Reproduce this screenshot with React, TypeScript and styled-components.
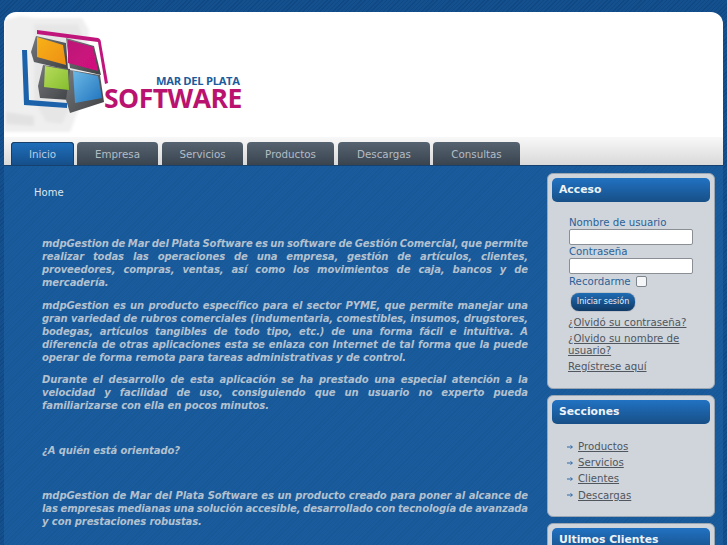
import React from "react";
import styled, { createGlobalStyle } from "styled-components";

const GlobalStyle = createGlobalStyle`
    html, body {
        margin: 0;
        padding: 0;
        height: 545px;
        overflow: hidden;
    }
    body {
        background-color: #124c88;
        background-image: repeating-linear-gradient(135deg, #104883 0 1px, #14508e 1px 3px);
        font-family: "DejaVu Sans", Verdana, sans-serif;
    }
`;

const Page = styled.div`
    margin: 12px 4px 0 4px;
    width: 719px;
`;

const Header = styled.header`
    background: #fff;
    border-radius: 12px 12px 0 0;
    height: 125px;
    overflow: hidden;
`;

const NavBar = styled.nav`
    display: flex;
    align-items: flex-end;
    height: 28px;
    padding-left: 7px;
    background: linear-gradient(#f8f8f8, #d9d9d9);
    border-bottom: 1px solid #16406e;
`;

const Tab = styled.a<{ $active?: boolean; $width: number; $gap: number }>`
    display: flex;
    align-items: center;
    justify-content: center;
    box-sizing: border-box;
    width: ${(p) => p.$width}px;
    margin-right: ${(p) => p.$gap}px;
    height: 23px;
    border-radius: 4px 4px 0 0;
    font-size: 10.3px;
    color: ${(p) => (p.$active ? "#b9cde2" : "#b4bcc4")};
    background: ${(p) => (p.$active ? "linear-gradient(#1f6fbb, #154f8b)" : "linear-gradient(#566370, #39444f)")};
    box-shadow: ${(p) => (p.$active ? "inset 0 1px 0 #173f68, inset 1px 0 0 #173f68, inset -1px 0 0 #173f68" : "none")};
`;

const Main = styled.div`
    display: flex;
    align-items: flex-start;
    background-color: #185a9b;
    background-image: repeating-linear-gradient(135deg, #175897 0 1px, #195b9c 1px 3px);
    height: 380px;
`;

const Content = styled.main`
    width: 494px;
    margin-left: 30px;
    padding-top: 20px;
`;

const Crumb = styled.div`
    font-size: 10px;
    color: #dce6f0;
    margin-bottom: 37px;
    line-height: 14px;
`;

const Article = styled.article`
    margin-left: 8px;
`;

const Para = styled.p<{ $gap?: number }>`
    margin: 0 0 ${(p) => p.$gap ?? 10}px 0;
    font-size: 10px;
    letter-spacing: -0.1px;
    word-spacing: -1.5px;
    line-height: 13px;
    font-weight: bold;
    font-style: italic;
    color: #b3c1cf;
`;

// the reference breaks its lines a little tighter than this font does, so they are set by hand
const Line = styled.span`
    display: block;
    text-align: justify;
    text-align-last: justify;

    &:last-child {
        text-align-last: left;
        word-spacing: 0;
    }
`;

const Sidebar = styled.aside`
    width: 168px;
    margin-left: 19px;
    padding-top: 7px;
    display: flex;
    flex-direction: column;
    gap: 6px;
`;

const Module = styled.section`
    box-sizing: border-box;
    background: #d0d5dc;
    border: 1px solid #9aa6b2;
    border-radius: 6px;
    padding: 4px;
`;

const ModuleTitle = styled.h3`
    margin: 0;
    height: 24px;
    line-height: 23px;
    padding-left: 7px;
    border-radius: 5px;
    font-size: 10.8px;
    font-weight: bold;
    color: #eef3f8;
    background: linear-gradient(#2172c2, #174f87);
`;

const LoginForm = styled.form`
    padding: 14px 0 6px 17px;
    font-size: 10.2px;
    color: #2a6298;
`;

const FieldLabel = styled.label`
    display: block;
    line-height: 13px;
`;

const TextField = styled.div`
    box-sizing: border-box;
    width: 124px;
    height: 16px;
    background: #fff;
    border: 1px solid #8a8f95;
    border-radius: 2px;
`;

const RememberRow = styled.div`
    display: flex;
    align-items: center;
    gap: 5px;
    height: 15px;
`;

const CheckBox = styled.span`
    box-sizing: border-box;
    width: 11px;
    height: 11px;
    background: #f4f6f8;
    border: 1px solid #7f858c;
    border-radius: 2px;
`;

const LoginButton = styled.div`
    width: 64px;
    height: 18px;
    margin: 4px 0 0 2px;
    border-radius: 8px;
    text-align: center;
    font-size: 8px;
    line-height: 17px;
    color: #e6eef6;
    background: linear-gradient(#1f6cb4, #103a66);
    box-shadow: 0 0 1px #223;
`;

const LinkList = styled.div`
    padding: 0 6px 7px 16px;
    font-size: 10.2px;
    line-height: 11.5px;
`;

const LinkItem = styled.a`
    display: block;
    margin-bottom: 4.5px;
    color: #4f565e;
    text-decoration: underline;
`;

const SectionList = styled.ul`
    list-style: none;
    margin: 0;
    padding: 15px 0 9px 15px;
`;

const SectionItem = styled.li`
    display: flex;
    align-items: center;
    gap: 5px;
    height: 16.2px;
    font-size: 10.2px;
    color: #4f565e;
    text-decoration: underline;
`;

const Arrow = () => (
    <svg width="6" height="6" viewBox="0 0 6 6" fill="none" stroke="#2a6bab" strokeWidth="1">
        <path d="M0 3h5M3.5 1.5 5.5 3 3.5 4.5" />
    </svg>
);

// viewBox starts at the header's corner, so the numbers below are page coordinates
const Logo = () => (
    <svg width="250" height="125" viewBox="4 12 250 125">
        <defs>
            <linearGradient id="orange" x1="0" y1="0" x2="1" y2="1"><stop offset="0" stopColor="#f7b21a" /><stop offset="1" stopColor="#ee8f10" /></linearGradient>
            <linearGradient id="magenta" x1="0" y1="0" x2="1" y2="1"><stop offset="0" stopColor="#bb1577" /><stop offset="1" stopColor="#d5107f" /></linearGradient>
            <linearGradient id="green" x1="0" y1="0" x2="1" y2="1"><stop offset="0" stopColor="#b7dc5b" /><stop offset="1" stopColor="#86bd2e" /></linearGradient>
            <linearGradient id="blue" x1="0" y1="0" x2="1" y2="1"><stop offset="0" stopColor="#6cb8e6" /><stop offset="1" stopColor="#1f73bd" /></linearGradient>
            <linearGradient id="body" x1="0" y1="0" x2="1" y2="1"><stop offset="0" stopColor="#77797c" /><stop offset="1" stopColor="#3e4144" /></linearGradient>
            <filter id="soft"><feGaussianBlur stdDeviation="0.5" /></filter>
            <filter id="softer"><feGaussianBlur stdDeviation="1.5" /></filter>
        </defs>
        <g filter="url(#softer)">
            <path d="M4 20 20 16 34 18 82 18 89 30 85 92 70 132 4 132Z" fill="#efefef" />
            <path d="M34 24 78 24 82 34 78 90 62 124 46 122 34 100Z" fill="#e6e6e6" />
            <path d="M6 112 34 116 34 126 6 124Z" fill="#e2e2e2" />
        </g>
        <g filter="url(#soft)">
            <path d="M27 50 22 50 24 105 67 108 67 103 29 100Z" fill="#1c62aa" />
            <path d="M37 34 37 30 98 38 Q101 39 101 43 L108 83 105 84 98 42 37 34Z" fill="#c0167c" />
            <path d="M36 36 66 43 68 70 34 62 31 52Z" fill="url(#body)" />
            <path d="M66 38 94 46 101 75 70 68Z" fill="url(#body)" />
            <path d="M43 65 70 69 72 92 70 100 40 98 38 86Z" fill="url(#body)" />
            <path d="M70 70 100 75 104 102 70 113 66 100Z" fill="url(#body)" />
            <path d="M37 37 63 45 66 65 37 57Z" fill="url(#orange)" />
            <path d="M68 40 93 47 98 71 68 63Z" fill="url(#magenta)" />
            <path d="M45 66 68 70 69 90 44 87Z" fill="url(#green)" />
            <path d="M73 71 98 76 102 98 75 103Z" fill="url(#blue)" />
        </g>
        <text x="156" y="85" fontFamily="Open Sans" fontWeight="700" fontSize="11.2" fill="#1c5c9c" letterSpacing="-0.3">MAR DEL PLATA</text>
        <text x="104" y="108" fontFamily="Open Sans" fontWeight="700" fontSize="26.5" fill="#b9126f" letterSpacing="-0.5">SOFTWARE</text>
    </svg>
);

const tabs = [
    { label: "Inicio", width: 63, gap: 3, active: true },
    { label: "Empresa", width: 81, gap: 4 },
    { label: "Servicios", width: 81, gap: 4 },
    { label: "Productos", width: 87, gap: 4 },
    { label: "Descargas", width: 92, gap: 3 },
    { label: "Consultas", width: 87, gap: 0 },
];

const sections = ["Productos", "Servicios", "Clientes", "Descargas"];

const paragraphs = [
    {
        gap: 10,
        lines: [
            "mdpGestion de Mar del Plata Software es un software de Gestión Comercial, que permite",
            "realizar todas las operaciones de una empresa, gestión de artículos, clientes,",
            "proveedores, compras, ventas, así como los movimientos de caja, bancos y de",
            "mercadería.",
        ],
    },
    {
        gap: 9,
        lines: [
            "mdpGestion es un producto específico para el sector PYME, que permite manejar una",
            "gran variedad de rubros comerciales (indumentaria, comestibles, insumos, drugstores,",
            "bodegas, artículos tangibles de todo tipo, etc.) de una forma fácil e intuitiva. A",
            "diferencia de otras aplicaciones esta se enlaza con Internet de tal forma que la puede",
            "operar de forma remota para tareas administrativas y de control.",
        ],
    },
    {
        gap: 32,
        lines: [
            "Durante el desarrollo de esta aplicación se ha prestado una especial atención a la",
            "velocidad y facilidad de uso, consiguiendo que un usuario no experto pueda",
            "familiarizarse con ella en pocos minutos.",
        ],
    },
    { gap: 32, lines: ["¿A quién está orientado?"] },
    {
        gap: 10,
        lines: [
            "mdpGestion de Mar del Plata Software es un producto creado para poner al alcance de",
            "las empresas medianas una solución accesible, desarrollado con tecnología de avanzada",
            "y con prestaciones robustas.",
        ],
    },
];

const App = () => (
    <>
        <GlobalStyle />
        <Page>
            <Header>
                <Logo />
            </Header>
            <NavBar>
                {tabs.map((t) => (
                    <Tab key={t.label} $active={t.active} $width={t.width} $gap={t.gap}>{t.label}</Tab>
                ))}
            </NavBar>
            <Main>
                <Content>
                    <Crumb>Home</Crumb>
                    <Article>
                        {paragraphs.map((p) => (
                            <Para key={p.lines[0]} $gap={p.gap}>
                                {p.lines.map((l) => <Line key={l}>{l}</Line>)}
                            </Para>
                        ))}
                    </Article>
                </Content>
                <Sidebar>
                    <Module>
                        <ModuleTitle>Acceso</ModuleTitle>
                        <LoginForm>
                            <FieldLabel>Nombre de usuario</FieldLabel>
                            <TextField />
                            <FieldLabel>Contraseña</FieldLabel>
                            <TextField />
                            <RememberRow>Recordarme <CheckBox /></RememberRow>
                            <LoginButton>Iniciar sesión</LoginButton>
                        </LoginForm>
                        <LinkList>
                            <LinkItem>¿Olvidó su contraseña?</LinkItem>
                            <LinkItem>¿Olvido su nombre de usuario?</LinkItem>
                            <LinkItem>Regístrese aquí</LinkItem>
                        </LinkList>
                    </Module>
                    <Module>
                        <ModuleTitle>Secciones</ModuleTitle>
                        <SectionList>
                            {sections.map((s) => (
                                <SectionItem key={s}><Arrow />{s}</SectionItem>
                            ))}
                        </SectionList>
                    </Module>
                    <Module>
                        <ModuleTitle>Ultimos Clientes</ModuleTitle>
                    </Module>
                </Sidebar>
            </Main>
        </Page>
    </>
);

export default App;
